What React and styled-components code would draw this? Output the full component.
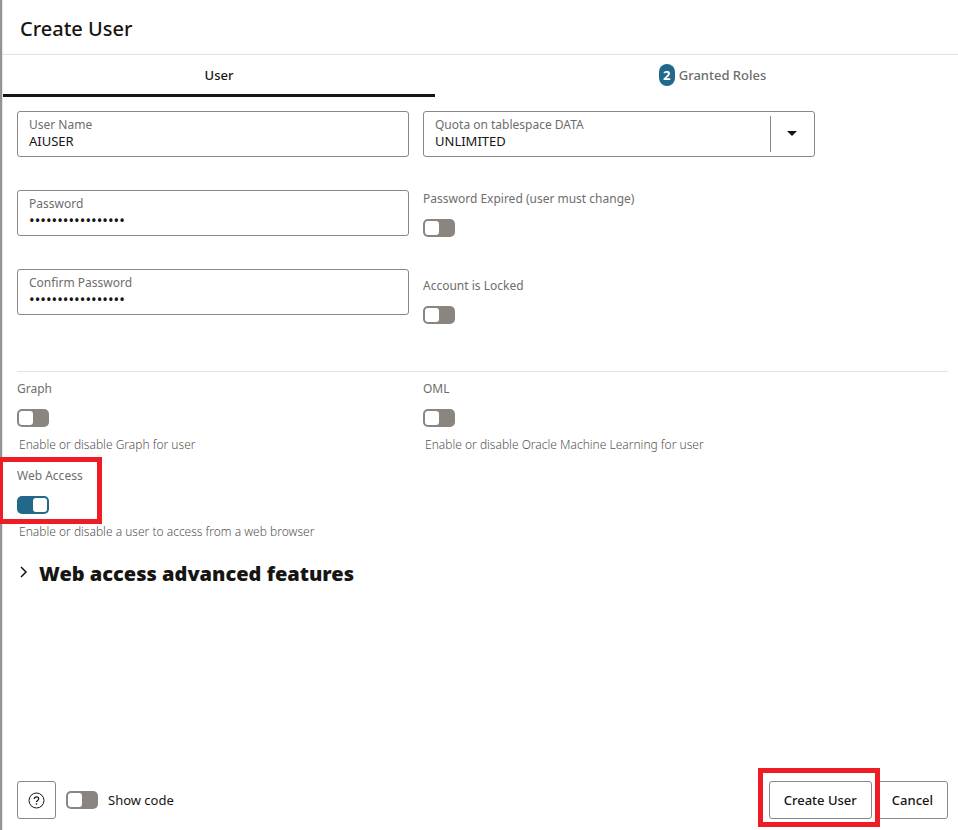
import React, { useState } from 'react';
import styled, { createGlobalStyle, css } from 'styled-components';

const ink = '#161513';
const muted = '#6f6d6b';
const outline = '#8a8785';
const rule = '#e4e3e2';
const accent = '#21688b';
const red = '#ee1c24';

const GlobalStyle = createGlobalStyle`
  *, *::before, *::after { box-sizing: border-box; }
  body {
    margin: 0;
    background: #fff;
    color: ${ink};
    font-family: "Noto Sans", "Open Sans", sans-serif;
    font-size: 13px;
  }
  button, input, select { font: inherit; color: inherit; }
`;

const Drawer = styled.main`
  display: flex;
  flex-direction: column;
  min-height: 100vh;
  border-left: 2px solid #939393;
  box-shadow: inset 1px 0 0 #e6e6e6;
  padding-left: 1px;
`;

const Header = styled.header`
  display: flex;
  align-items: center;
  height: 55px;
  padding: 4px 17px 0;
  border-bottom: 1px solid ${rule};
`;

const Title = styled.h1`
  margin: 0;
  font-size: 20px;
  font-weight: 500;
  line-height: 28px;
`;

const TabBar = styled.div`
  display: grid;
  grid-template-columns: 19fr 23fr;
`;

const Tab = styled.button`
  display: flex;
  align-items: center;
  justify-content: center;
  gap: 4px;
  height: 42px;
  padding: ${(p) => (p.$offset ? '0 0 0 32px' : '0')};
  border: 0;
  border-bottom: 3px solid ${(p) => (p.$active ? ink : 'transparent')};
  background: none;
  color: ${(p) => (p.$active ? ink : muted)};
  font-weight: 500;
  line-height: 20px;
`;

const Count = styled.span`
  width: 16px;
  height: 22px;
  border-radius: 8px;
  background: ${accent};
  color: #fff;
  font-weight: 700;
  line-height: 22px;
  text-align: center;
`;

const Content = styled.form`
  flex: 1;
  display: flex;
  flex-direction: column;
  padding: 14px 10px 11px 14px;
`;

const Columns = styled.div`
  display: grid;
  grid-template-columns: repeat(2, minmax(0, 392px));
  column-gap: 14px;
  align-items: start;
`;

const Stack = styled.div`
  display: flex;
  flex-direction: column;
  gap: ${(p) => p.$gap}px;
`;

const FieldBox = styled.div`
  display: flex;
  height: 46px;
  border: 1px solid ${outline};
  border-radius: 3px;
`;

const FieldText = styled.label`
  flex: 1;
  min-width: 0;
  display: flex;
  flex-direction: column;
  padding: 5px 0 0 11px;
`;

const Label = styled.span`
  color: ${muted};
  font-size: 12px;
  line-height: 16px;
`;

const control = css`
  width: 100%;
  height: 16px;
  padding: 0;
  border: 0;
  outline: 0;
  background: none;
  line-height: 16px;
`;

const Input = styled.input`
  ${control}
  font-size: ${(p) => (p.type === 'password' ? 15 : 13)}px;
`;

const Select = styled.select`
  ${control}
  appearance: none;
`;

const Caret = styled.span`
  display: flex;
  align-items: center;
  justify-content: center;
  width: 44px;
  margin: 4px 0;
  padding: 0 2px 2px 0;
  border-left: 1px solid ${outline};
`;

const ToggleGroup = styled.div`
  position: relative;
  display: flex;
  flex-direction: column;
  align-items: flex-start;
`;

const ToggleLabel = styled.label`
  margin-bottom: 12px;
  color: ${muted};
  font-size: 12px;
  line-height: 16px;
`;

const Hint = styled.p`
  margin: 10px 0 0;
  padding-left: 2px;
  color: #565452;
  font-size: 12px;
  font-weight: 300;
  line-height: 16px;
`;

const Switch = styled.input`
  appearance: none;
  display: flex;
  align-items: center;
  flex: none;
  width: 32px;
  height: 18px;
  margin: 0;
  padding: 0 2px;
  border-radius: 5px;
  background: #8b8580;

  &::before {
    content: '';
    width: 14px;
    height: 14px;
    border-radius: 3px;
    background: #fff;
  }
  &:checked {
    justify-content: flex-end;
    background: ${accent};
  }
`;

const Divider = styled.hr`
  width: 100%;
  margin: 47px 0 9px;
  border: 0;
  border-top: 1px solid ${rule};
`;

const Highlight = styled.span`
  position: absolute;
  inset: ${(p) => p.$inset};
  border: 5px solid ${red};
  pointer-events: none;
`;

const AccessHighlight = styled(Highlight)`
  width: 104px;
`;

const Disclosure = styled.button`
  display: flex;
  align-items: center;
  align-self: flex-start;
  gap: 10px;
  margin-top: 20px;
  padding: 0 0 0 2px;
  border: 0;
  background: none;

  svg { margin-bottom: 4px; }
`;

const DisclosureTitle = styled.span`
  font-size: 20px;
  font-weight: 900;
  line-height: 28px;
`;

const Footer = styled.footer`
  display: flex;
  align-items: center;
  gap: 10px;
  margin-top: auto;
`;

const Button = styled.button`
  display: flex;
  align-items: center;
  justify-content: center;
  height: 38px;
  padding: 0 14px;
  border: 1px solid ${outline};
  border-radius: 3px;
  background: #fff;
  font-weight: 500;
  line-height: 20px;
`;

const IconButton = styled(Button)`
  width: 39px;
  padding: 0;
`;

const Actions = styled.div`
  display: flex;
  gap: 5px;
  margin-left: auto;
`;

const Primary = styled.div`
  position: relative;
  z-index: 1;
`;

const ShowCode = styled.label`
  line-height: 20px;
`;

const OptionColumn = styled(Stack)`
  gap: 41px;
`;

const QuotaSlot = styled.div`
  margin-bottom: -7px;
`;

function TextField({ label, ...rest }) {
  return (
    <FieldBox>
      <FieldText>
        <Label>{label}</Label>
        <Input {...rest} />
      </FieldText>
    </FieldBox>
  );
}

function Toggle({ id, label, hint, defaultChecked, children }) {
  return (
    <ToggleGroup>
      <ToggleLabel htmlFor={id}>{label}</ToggleLabel>
      <Switch id={id} type="checkbox" role="switch" defaultChecked={defaultChecked} />
      {hint && <Hint>{hint}</Hint>}
      {children}
    </ToggleGroup>
  );
}

export default function App() {
  const [tab, setTab] = useState('user');
  return (
    <>
      <GlobalStyle />
      <Drawer>
        <Header>
          <Title>Create User</Title>
        </Header>
        <TabBar role="tablist">
          <Tab role="tab" aria-selected={tab === 'user'} $active={tab === 'user'} onClick={() => setTab('user')}>
            User
          </Tab>
          <Tab role="tab" aria-selected={tab === 'roles'} $active={tab === 'roles'} $offset onClick={() => setTab('roles')}>
            <Count>2</Count>
            Granted Roles
          </Tab>
        </TabBar>
        <Content onSubmit={(e) => e.preventDefault()}>
          <Columns>
            <Stack $gap={33}>
              <TextField label="User Name" type="text" defaultValue="AIUSER" />
              <TextField label="Password" type="password" defaultValue="Welcome12345#User" />
              <TextField label="Confirm Password" type="password" defaultValue="Welcome12345#User" />
            </Stack>
            <OptionColumn>
              <QuotaSlot>
                <FieldBox>
                  <FieldText>
                    <Label>Quota on tablespace DATA</Label>
                    <Select defaultValue="UNLIMITED">
                      <option>UNLIMITED</option>
                      <option>DEFAULT</option>
                    </Select>
                  </FieldText>
                  <Caret>
                    <svg width="10" height="5" viewBox="0 0 10 5" aria-hidden="true">
                      <path d="M0 0h10L5 5z" fill={ink} />
                    </svg>
                  </Caret>
                </FieldBox>
              </QuotaSlot>
              <Toggle id="expired" label="Password Expired (user must change)" />
              <Toggle id="locked" label="Account is Locked" />
            </OptionColumn>
          </Columns>
          <Divider />
          <Columns>
            <Stack $gap={15}>
              <Toggle id="graph" label="Graph" hint="Enable or disable Graph for user" />
              <Toggle
                id="web"
                label="Web Access"
                hint="Enable or disable a user to access from a web browser"
                defaultChecked
              >
                <AccessHighlight $inset="-11px auto 16px -19px" />
              </Toggle>
            </Stack>
            <Toggle id="oml" label="OML" hint="Enable or disable Oracle Machine Learning for user" />
          </Columns>
          <Disclosure type="button" aria-expanded="false">
            <svg width="10" height="14" viewBox="0 0 10 14" fill="none" aria-hidden="true">
              <path d="M2 2l5 5-5 5" stroke={ink} strokeWidth="1.5" />
            </svg>
            <DisclosureTitle>Web access advanced features</DisclosureTitle>
          </Disclosure>
          <Footer>
            <IconButton type="button" aria-label="Help">
              <svg width="17" height="17" viewBox="0 0 17 17" fill="none" aria-hidden="true">
                <circle cx="8.5" cy="8.5" r="7.5" stroke={ink} />
                <path d="M6.3 6.9c0-1.3.9-2.1 2.2-2.1s2.2.8 2.2 2c0 1.6-2.2 1.7-2.2 3.3" stroke={ink} strokeWidth="1.2" />
                <circle cx="8.5" cy="12" r="0.8" fill={ink} />
              </svg>
            </IconButton>
            <Switch id="code" type="checkbox" role="switch" />
            <ShowCode htmlFor="code">Show code</ShowCode>
            <Actions>
              <Primary>
                <Button type="submit">Create User</Button>
                <Highlight $inset="-13px -8px -8px -11px" />
              </Primary>
              <Button type="button">Cancel</Button>
            </Actions>
          </Footer>
        </Content>
      </Drawer>
    </>
  );
}
